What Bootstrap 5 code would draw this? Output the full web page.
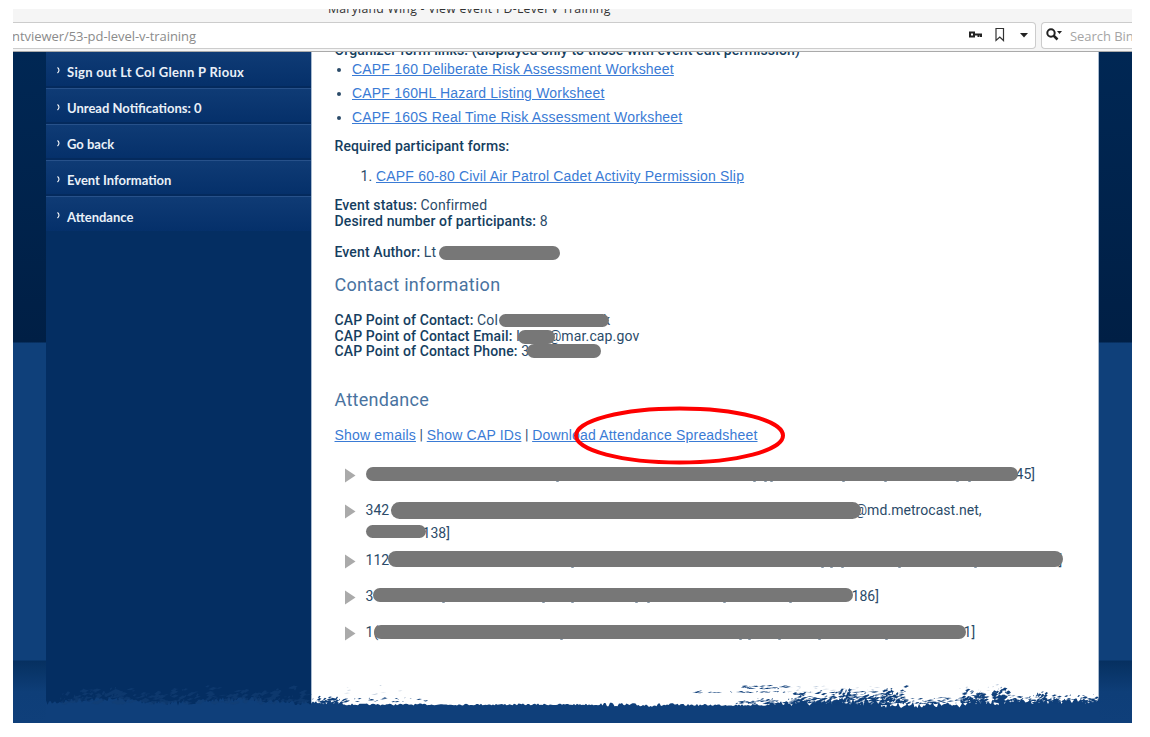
<!DOCTYPE html>
<html lang="en">
<head>
<meta charset="utf-8">
<meta name="viewport" content="width=device-width, initial-scale=1">
<title>Maryland Wing - View event PD-Level V Training</title>
<link rel="stylesheet" href="https://cdn.jsdelivr.net/npm/bootstrap@5.3.0/dist/css/bootstrap.min.css">
<style>
body{background:#fff;font-family:Roboto,sans-serif;font-size:14px;line-height:16px;color:#2b4b69}
.window{width:1119px;height:714px;margin:9px 0 0 13px;background:#f5f5f5}
.titlebar{height:12px;padding-left:315px;color:#333;font:12.3px/14px "Open Sans",sans-serif;letter-spacing:.24px}
.titlebar span{margin-top:-7px;white-space:nowrap}
.toolbar{height:30px;gap:5px;color:#8b8b8b;font:13px/26px "Open Sans",sans-serif;letter-spacing:-.05px}
.field{height:27px;background:#fff;border:1px solid #ccc;white-space:nowrap}
.url{width:1023px;flex:none;border-radius:0 4px 4px 0;border-width:1px 1px 1px 0}
.search{flex:1;min-width:0;overflow:hidden;border-right:0;border-radius:4px 0 0 4px;color:#a5a5a5}
.site{height:672px;background:linear-gradient(#002754,#001f45 290px,#0f407a 291px,#0f407a 608px,#063060 609px,#0e3e78 640px,#0f3f7a);border-top:1px solid #aaa}
.side{width:265px;margin-left:33px;background:#042e62}
.side a{height:36px;padding:5px 0 0 11px;color:#e9f0f8;font:bold 13px/30px Lato,sans-serif;text-decoration:none;background:linear-gradient(#0f3b75,#05306a);border-top:1px solid #27518a;border-bottom:2px solid #042a5d;white-space:nowrap}
.side a:first-child{border-top:0;letter-spacing:.3px}
.side a:last-child{height:35px;border-bottom:0}
.side svg{margin-right:6px;margin-bottom:1px}
.panel-page{width:788px;background:#fff;border-left:1px solid #a9bbd0;border-right:1px solid #a9bbd0;padding-left:22.5px;white-space:nowrap;letter-spacing:.13px}
.side a{display:flex;align-items:center}
.panel-page a{color:#3a7bd5;text-decoration:underline;font-family:"Liberation Sans",Arial,sans-serif;text-underline-offset:1px;letter-spacing:.19px}
.panel-page b{font-weight:500;color:#153e60}
.links li{height:24px;line-height:24px}
.sect{font-size:18px;line-height:24px;font-weight:400;color:#49739f;letter-spacing:.29px}
.contact div{height:15.5px;line-height:15.5px}
.people{letter-spacing:.05px}
.people li{display:flex;margin-bottom:13px;line-height:23px}
.people svg{width:11px;height:15px;margin:5px 10px 0 10px;flex:none}
.ln{position:relative;height:23px;flex:none}
.bar{position:absolute;background:#777;border-radius:9px}
.bar i{position:absolute;top:100%;height:1px;width:3px;background:#8597a8;border-radius:0 0 2px 2px}
.oval{position:absolute;left:238px;top:-21px}
.torn{position:absolute;left:0;bottom:0}
</style>
</head>
<body class="overflow-hidden">
<div class="window overflow-hidden">
  <div class="titlebar overflow-hidden d-flex"><span>Maryland Wing - View event PD-Level V Training</span></div>
  <div class="toolbar d-flex align-items-start">
    <div class="field url d-flex align-items-center" style="margin-top:1px"><span class="me-auto" style="margin-left:-1px">ntviewer/53-pd-level-v-training</span>
      <svg width="60" height="18" viewBox="0 0 60 18" style="margin:0 7px 2px 0"><path d="M2 6.500h4v4H2zM7 8.500h7M10.500 9v2M13 9v2" fill="none" stroke="#222" stroke-width="2"/><path d="M28 2.500h7.500v12l-3.700-3.500-3.800 3.500z" fill="none" stroke="#333" stroke-width="1.200"/><path d="M52 7h8l-4 4.500z" fill="#222"/></svg>
    </div>
    <div class="field search d-flex align-items-center" style="margin-top:1px">
      <svg width="18" height="18" viewBox="0 0 18 18" style="margin:0 7px 2px 3px;flex:none"><circle cx="6" cy="7" r="3.700" fill="none" stroke="#222" stroke-width="2"/><path d="M8.500 9.500l4 4" stroke="#222" stroke-width="2.500"/><path d="M12 5h5l-2.500 3z" fill="#222"/></svg><span>Search Bing</span>
    </div>
  </div>
  <div class="site d-flex position-relative">
    <nav class="side flex-shrink-0">
      <a href="#"><svg width="4" height="8" viewBox="0 0 4 8"><path d="M.5.5q3 2.500 0 5.500" fill="none" stroke="#fff" stroke-width="1.100"/></svg><span>Sign out Lt Col Glenn P Rioux</span></a>
      <a href="#"><svg width="4" height="8" viewBox="0 0 4 8"><path d="M.5.5q3 2.500 0 5.500" fill="none" stroke="#fff" stroke-width="1.100"/></svg><span>Unread Notifications: 0</span></a>
      <a href="#"><svg width="4" height="8" viewBox="0 0 4 8"><path d="M.5.5q3 2.500 0 5.500" fill="none" stroke="#fff" stroke-width="1.100"/></svg><span>Go back</span></a>
      <a href="#"><svg width="4" height="8" viewBox="0 0 4 8"><path d="M.5.5q3 2.500 0 5.500" fill="none" stroke="#fff" stroke-width="1.100"/></svg><span>Event Information</span></a>
      <a href="#"><svg width="4" height="8" viewBox="0 0 4 8"><path d="M.5.5q3 2.500 0 5.500" fill="none" stroke="#fff" stroke-width="1.100"/></svg><span>Attendance</span></a>
    </nav>
    <main class="panel-page flex-shrink-0 overflow-hidden">
      <div style="margin-top:-10px"><b>Organizer form links: (displayed only to those with event edit permission)</b></div>
      <ul class="links mb-0" style="padding-left:17.500px;margin-top:-1px">
        <li><a href="#">CAPF 160 Deliberate Risk Assessment Worksheet</a></li>
        <li><a href="#">CAPF 160HL Hazard Listing Worksheet</a></li>
        <li><a href="#">CAPF 160S Real Time Risk Assessment Worksheet</a></li>
      </ul>
      <div style="margin-top:9px"><b>Required participant forms:</b></div>
      <ol class="links mb-0" style="padding-left:41.500px;margin-top:10px"><li><a href="#">CAPF 60-80 Civil Air Patrol Cadet Activity Permission Slip</a></li></ol>
      <div style="margin-top:9px"><b>Event status:</b> Confirmed</div>
      <div><b>Desired number of participants:</b> 8</div>
      <div class="position-relative" style="margin-top:15px"><b>Event Author:</b> Lt <span class="bar" style="left:104px;top:2px;width:121px;height:14px"></span></div>
      <h3 class="sect mb-0" style="margin-top:13px">Contact information</h3>
      <div class="contact" style="margin-top:16px">
        <div class="position-relative"><b>CAP Point of Contact:</b> Col<span style="margin-left:105px">k</span><span class="bar" style="left:164px;top:1px;width:110px;height:13px"></span></div>
        <div class="position-relative"><b>CAP Point of Contact Email:</b> l<span style="margin-left:29px">@mar.cap.gov</span><span class="bar" style="left:183px;top:1px;width:37px;height:14px"></span></div>
        <div class="position-relative"><b>CAP Point of Contact Phone:</b> 3<span class="bar" style="left:192px;top:0;width:74px;height:14px"></span></div>
      </div>
      <h3 class="sect mb-0" style="margin-top:28.500px">Attendance</h3>
      <div class="position-relative" style="margin-top:15px"><a href="#">Show emails</a> | <a href="#">Show CAP IDs</a> | <a href="#">Download Attendance Spreadsheet</a>
        <svg class="oval" width="214" height="62" viewBox="0 0 214 62"><ellipse cx="106.500" cy="29.500" rx="103.500" ry="27" fill="none" stroke="#fe0000" stroke-width="4"/></svg></div>
      <ul class="people list-unstyled mb-0" id="people" style="margin-top:20px"></ul>
    </main>
    <svg class="torn" id="torn" width="1119" height="70" viewBox="13 653 1119 70" shape-rendering="geometricPrecision"></svg>
  </div>
</div>
<script>
// Attendance rows: each line holds [x, text] runs, a redaction bar [x, y, w, h] and letter tails under the bar
const rows=[
 [{t:[[650,'45]']],b:[0,4,652,14],d:[190,387,398,404,476,518,590,602]}],
 [{t:[[0,'342'],[489,'@md.metrocast.net,']],b:[25,3,470,17],d:[]},{t:[[57,'138]']],b:[0,3,60,13],d:[]}],
 [{t:[[0,'112'],[693,']']],b:[22,2,675,16],d:[205,455,464,475,532,608]}],
 [{t:[[0,'3'],[486,'186]']],b:[7,3,480,14],d:[76,176,205,269,281,357,423]}],
 [{t:[[0,'1('],[598,'1]']],b:[8,4,592,14],d:[194,373,382,412,452,519]}]];
document.getElementById('people').innerHTML=rows.map((r,i)=>`<li${i==1?' style="margin-bottom:4px"':''}><svg viewBox="0 0 11 15"><path d="M0 .5l10.500 7L0 14.500z" fill="#aaa"/></svg><div>`+r.map(l=>`<div class="ln">${l.t.map(t=>`<span style="position:absolute;left:${t[0]}px">${t[1]}</span>`).join('')}<span class="bar" style="left:${l.b[0]}px;top:${l.b[1]}px;width:${l.b[2]}px;height:${l.b[3]}px">${l.d.map(d=>`<i style="left:${d-l.b[0]}px"></i>`).join('')}</span></div>`).join('')+'</div></li>').join('');
// Brushed lower edge: ragged base line plus horizontal flecks whose density follows the brush stroke
let s=7;const rnd=()=>(s=(s*16807)%2147483647)/2147483647;
function edge(x0,x1,y,amp){let p=`M${x0} 723`;for(let x=x0;x<=x1;x+=1.5)p+=`L${x.toFixed(1)} ${(y(x)+(rnd()-.5)*amp(x)).toFixed(1)}`;return p+`L${x1} 723z`}
function flecks(x0,x1,y0,y1,n,w,h){let p='';for(let i=0;i<n;i++){const x=x0+rnd()*(x1-x0),k=Math.sqrt(rnd()),y=y0+k*(y1-y0),a=.6+rnd()*w,b=.3+rnd()*h;p+=`M${x.toFixed(1)} ${y.toFixed(1)}l${a.toFixed(1)} ${(-b).toFixed(1)} ${(a*.8).toFixed(1)} ${(b*.4).toFixed(1)} ${(-a).toFixed(1)} ${b.toFixed(1)}z`}return p}
const base=x=>x<345?703:x<620?704.5:x<770?705:x<830?703:x<880?702:x<960?705:x<1000?702.5:701;
const amp=x=>x<345?5:x<600?1.8:x<680?4:x<770?2:x<880?7:6;
let g=`<path fill="#0f3f7a" d="${edge(46,310,x=>701+Math.sin(x/22)*2,()=>5)}${edge(310,1099,base,amp)}"/>`;
g+=`<path fill="#123d73" opacity=".65" d="${flecks(60,306,686,704,260,5,3)}"/>`;
g+=`<path fill="#0f3f7a" d="${flecks(312,345,696,704,45,3,1.5)}${flecks(345,425,697,702,25,3,.7)}${flecks(740,785,685,689,28,4,.8)}${flecks(690,785,691,693,30,4,.6)}${flecks(735,805,697,704,65,4,.8)}${flecks(790,890,691,705,260,4,1.5)}${flecks(838,849,687,702,32,2,3)}${flecks(880,905,686,704,60,3,2.5)}${flecks(900,960,697,704,55,4,1)}${flecks(960,985,689,703,90,3,2)}${flecks(991,1006,688,703,80,3,2.5)}${flecks(1006,1098,694,703,140,3,1.5)}${flecks(1035,1045,690,701,22,2,2)}"/>`;
g+=`<path fill="#9db1ca" opacity=".6" d="${flecks(340,400,685,695,8,4,.5)}${flecks(780,880,685,693,35,4,.5)}${flecks(955,1010,684,694,14,2,1)}"/>`;
document.getElementById('torn').innerHTML=g;
</script>
<script src="https://cdn.jsdelivr.net/npm/bootstrap@5.3.0/dist/js/bootstrap.bundle.min.js"></script>
</body>
</html>
